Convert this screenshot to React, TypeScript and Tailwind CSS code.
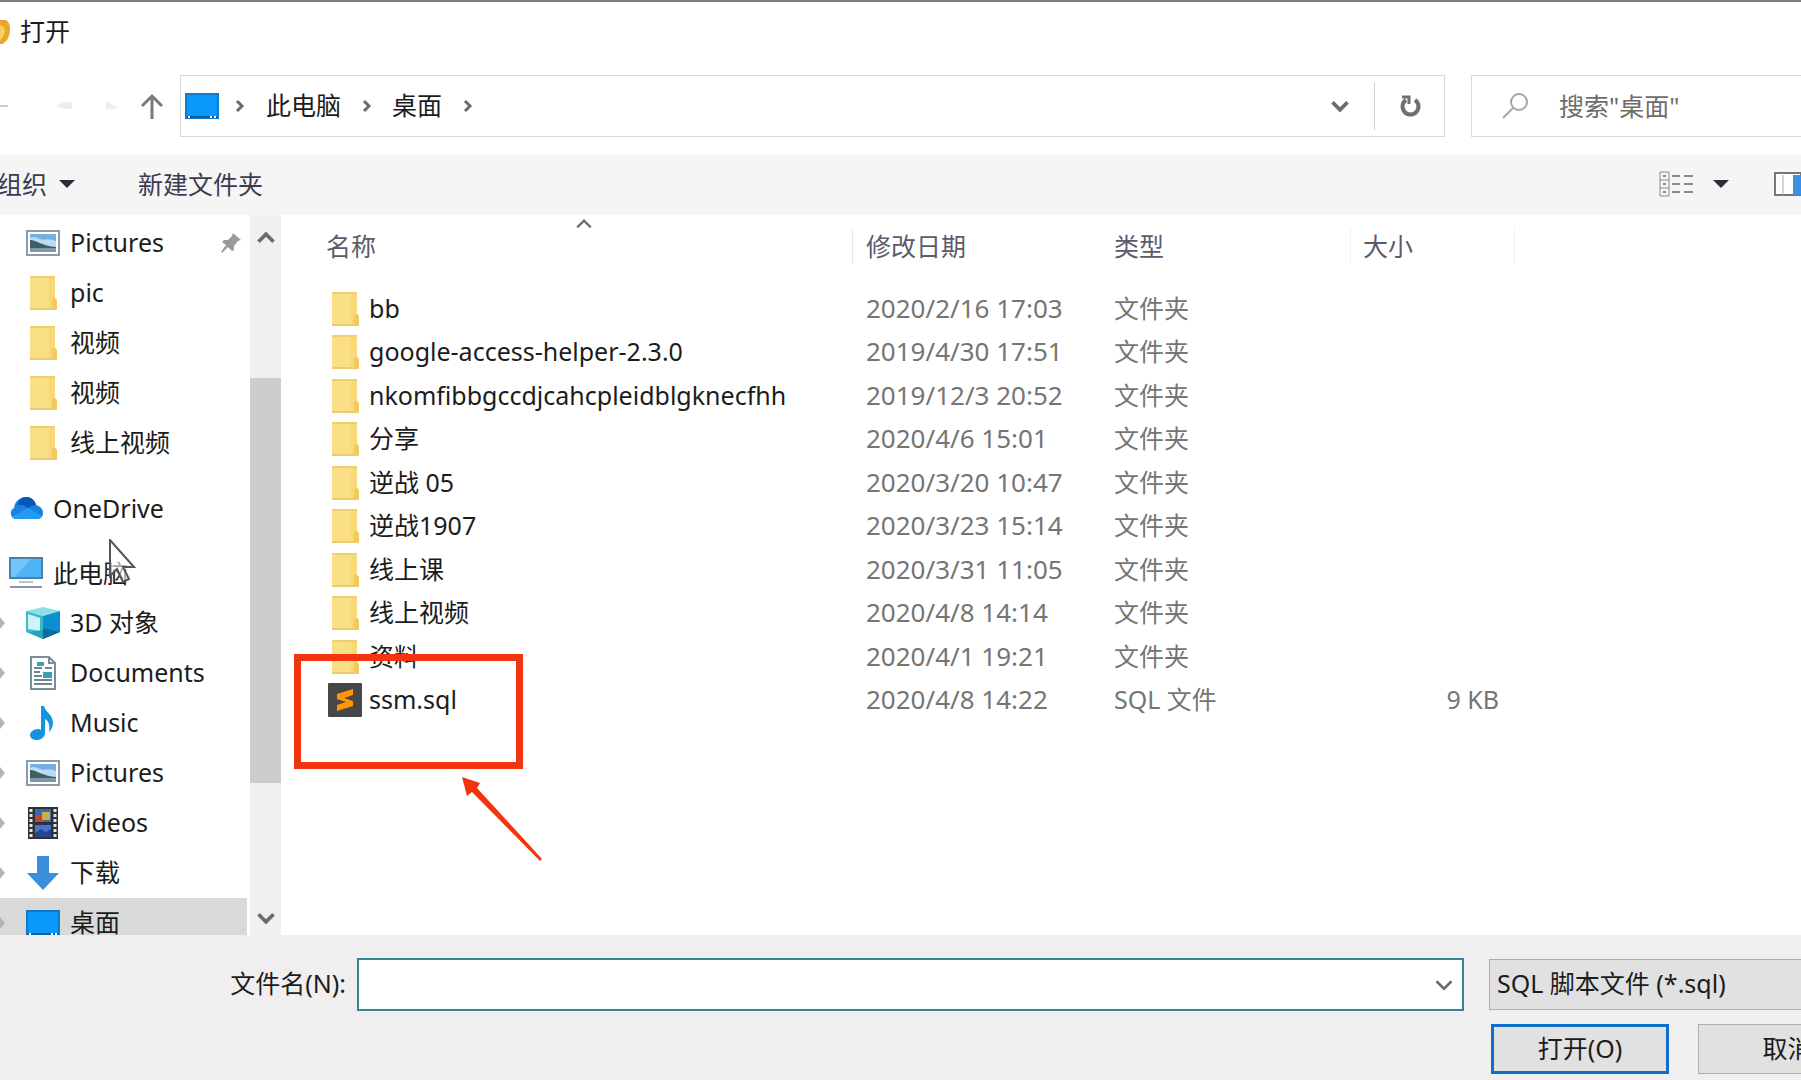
import type { ReactNode } from "react";

const quickAccess = [
  { label: "Pictures", icon: "pictures", pinned: true },
  { label: "pic", icon: "folder" },
  { label: "视频", icon: "folder" },
  { label: "视频", icon: "folder" },
  { label: "线上视频", icon: "folder" },
];

const thisPc = [
  { label: "3D 对象", icon: "cube" },
  { label: "Documents", icon: "documents" },
  { label: "Music", icon: "music" },
  { label: "Pictures", icon: "pictures" },
  { label: "Videos", icon: "videos" },
  { label: "下载", icon: "download" },
  { label: "桌面", icon: "desktop", selected: true },
];

const files = [
  { name: "bb", date: "2020/2/16 17:03", type: "文件夹", size: "" },
  { name: "google-access-helper-2.3.0", date: "2019/4/30 17:51", type: "文件夹", size: "" },
  { name: "nkomfibbgccdjcahcpleidblgknecfhh", date: "2019/12/3 20:52", type: "文件夹", size: "" },
  { name: "分享", date: "2020/4/6 15:01", type: "文件夹", size: "" },
  { name: "逆战 05", date: "2020/3/20 10:47", type: "文件夹", size: "" },
  { name: "逆战1907", date: "2020/3/23 15:14", type: "文件夹", size: "" },
  { name: "线上课", date: "2020/3/31 11:05", type: "文件夹", size: "" },
  { name: "线上视频", date: "2020/4/8 14:14", type: "文件夹", size: "" },
  { name: "资料", date: "2020/4/1 19:21", type: "文件夹", size: "" },
  { name: "ssm.sql", date: "2020/4/8 14:22", type: "SQL 文件", size: "9 KB" },
];

function FolderIcon() {
  return (
    <svg width="34" height="36" viewBox="0 0 34 36">
      <path d="M4 1h25v22l2 2v10H4z" fill="#fbdf86" />
      <path d="M4 1h25v2H4z" fill="#efd06c" />
      <path d="M23 3h6v19l-3 4v7h-3z" fill="#f9d878" />
      <path d="M26 25l2-3 3 3v10h-5z" fill="#f1c95c" />
      <path d="M4 33h27v2H4z" fill="#eccb6c" />
    </svg>
  );
}

function PicturesIcon() {
  return (
    <svg width="34" height="26" viewBox="0 0 34 26">
      <rect x="1" y="1" width="32" height="24" fill="#fff" stroke="#8e9aa5" strokeWidth="2" />
      <rect x="4" y="4" width="26" height="18" fill="#b9dcf3" />
      <path d="M4 4h26v7c-8-3-12 0-16-2S7 6 4 8z" fill="#75aee2" />
      <path d="M4 10c7 0 12 6 26 7v2H4z" fill="#3f5f5f" />
      <path d="M4 18h26v4H4z" fill="#7d99a8" />
    </svg>
  );
}

function DesktopIcon() {
  return (
    <svg width="34" height="26" viewBox="0 0 34 26">
      <rect x="1" y="1" width="32" height="24" fill="#0a98fb" stroke="#1478c8" strokeWidth="2" />
      <path d="M2 23h30v2H2z" fill="#0b5f9f" />
      <path d="M3 23h2v2H3zM25 23h2v2h-2zM29 23h2v2h-2z" fill="#fff" />
    </svg>
  );
}

function CubeIcon() {
  return (
    <svg width="34" height="34" viewBox="0 0 34 34">
      <path d="M0 5L17 1l17 4-17 5z" fill="#8fdfe6" />
      <path d="M0 5l17 5v23L0 26z" fill="#37bccb" />
      <path d="M2 8l12 4v13L2 23z" fill="#cdf3f5" />
      <path d="M17 10l17-5v21l-17 7z" fill="#0b8fcf" />
      <path d="M17 22l17 4-17 7z" fill="#0a6d9e" />
      <path d="M17 33V24L2 26z" fill="#25a6b4" />
    </svg>
  );
}

function DocumentsIcon() {
  return (
    <svg width="34" height="34" viewBox="0 0 34 34">
      <path d="M5 1h18l6 6v26H5z" fill="#fff" stroke="#78909a" strokeWidth="2" />
      <path d="M23 1v6h6" fill="none" stroke="#78909a" strokeWidth="2" />
      <path d="M8 12h8M8 16h6M8 20h8M8 24h18M8 28h18M19 12h7" stroke="#6b8792" strokeWidth="2" />
      <path d="M11 6h7v4h-7zM17 16h9v6h-9z" fill="#3d9fb4" />
    </svg>
  );
}

function MusicIcon() {
  return (
    <svg width="34" height="36" viewBox="0 0 34 36">
      <path
        d="M15 1h3c1 6 9 8 9 17 0 4-2 7-4 9 1-6 0-11-4-13v14c0 4-4 7-8 7s-7-2-7-5 4-6 8-6c1 0 2 0 3 1z"
        fill="#1494e0"
      />
    </svg>
  );
}

function VideosIcon() {
  return (
    <svg width="34" height="32" viewBox="0 0 34 32">
      <rect x="2" width="30" height="32" fill="#2f3137" />
      <path d="M5 2v30M29 2v30" stroke="#e4e6e8" strokeWidth="3" strokeDasharray="3 2" />
      <rect x="9" y="2" width="16" height="13" fill="#3a68b8" />
      <path d="M9 8h8v7H9z" fill="#c0463a" />
      <path d="M16 5h8v8h-8z" fill="#c8b23c" />
      <rect x="9" y="18" width="16" height="12" fill="#4474cf" />
      <path d="M9 26l6-4 5 3 5-3v8H9z" fill="#27458a" />
    </svg>
  );
}

function DownloadIcon() {
  return (
    <svg width="34" height="34" viewBox="0 0 34 34">
      <path d="M11 0h12v17h10L17 34 1 17h10z" fill="#3a8fdd" />
    </svg>
  );
}

function OneDriveIcon() {
  return (
    <svg width="34" height="24" viewBox="0 0 34 24">
      <path d="M6 23a6 6 0 0 1-1-11C6 5 11 1 17 1c5 0 9 3 10 8 4 1 7 4 7 8s-3 6-6 6z" fill="#1683e0" />
      <path d="M8 9c2-5 5-8 9-8 5 0 9 3 10 8-3 0-5 1-8 3-4-3-7-4-11-3z" fill="#0a56b6" />
      <path d="M3 21l16-9 14 8c-1 2-3 3-5 3H6z" fill="#249bf0" />
    </svg>
  );
}

function ComputerIcon() {
  return (
    <svg width="34" height="32" viewBox="0 0 34 32">
      <rect x="1" y="1" width="32" height="20" fill="#4fb3f8" stroke="#4a7fa8" strokeWidth="2" />
      <path d="M2 2h20L6 20H2z" fill="#73c5fb" />
      <path d="M10 24h14v2H10z" fill="#b9c3cb" />
      <path d="M1 29h32v2H1z" fill="#8996a3" />
    </svg>
  );
}

function SublimeIcon() {
  return (
    <svg width="34" height="34" viewBox="0 0 34 34">
      <rect width="34" height="34" rx="1" fill="#474747" />
      <path d="M9 11l16-5v6l-9 3 9 3v5L9 28v-6l9-3-9-3z" fill="#ff9800" />
    </svg>
  );
}

function Chevron({ direction, size = 16, stroke = 3 }: { direction: "up" | "down" | "right"; size?: number; stroke?: number }) {
  const paths = { up: "M2 11l6-6 6 6", down: "M2 5l6 6 6-6", right: "M6 3l5 5-5 5" };
  return (
    <svg width={size} height={size} viewBox="0 0 16 16" fill="none" stroke="#6c6c6c" strokeWidth={stroke}>
      <path d={paths[direction]} />
    </svg>
  );
}

function Triangle() {
  return (
    <svg width="16" height="8" viewBox="0 0 16 8">
      <path d="M0 0h16L8 8z" fill="#2e2e3a" />
    </svg>
  );
}

const icons: Record<string, ReactNode> = {
  folder: <FolderIcon />,
  pictures: <PicturesIcon />,
  cube: <CubeIcon />,
  documents: <DocumentsIcon />,
  music: <MusicIcon />,
  videos: <VideosIcon />,
  download: <DownloadIcon />,
  desktop: <DesktopIcon />,
};

function TitleBar() {
  return (
    <header className="flex h-[60px] items-center gap-[10px]">
      <svg width="10" height="26" viewBox="0 0 10 26">
        <path d="M0 1h6c3 2 4 5 4 9 0 7-3 13-8 15H0z" fill="#eca42a" />
        <path d="M0 6c4 1 6 5 4 10l-4 6z" fill="#f9cf62" />
      </svg>
      <h1 className="pb-[2px]">打开</h1>
    </header>
  );
}

function AddressBar() {
  return (
    <nav className="flex items-center pt-[13px]">
      <div className="flex w-[180px] shrink-0 items-center">
        <button aria-label="后退" className="w-[72px]">
          <svg width="72" height="16" viewBox="0 0 72 16">
            <path d="M0 8h8" stroke="#ccc" strokeWidth="2" />
            <path d="M56 8l8-4h8v7h-8z" fill="#ececec" />
          </svg>
        </button>
        <button aria-label="前进" className="ml-8 w-4">
          <svg width="16" height="10" viewBox="0 0 16 10">
            <path d="M2 0l13 7-13 2z" fill="#eee" />
          </svg>
        </button>
        <button aria-label="向上" className="ml-5">
          <svg width="24" height="26" viewBox="0 0 24 26" fill="none" stroke="#7a7a7a" strokeWidth="3">
            <path d="M12 26V3M2 13L12 3l10 10" />
          </svg>
        </button>
      </div>
      <div className="flex h-[62px] flex-1 items-center border border-[#d9d9d9] pl-1">
        <DesktopIcon />
        <span className="ml-3 flex w-[35px] justify-start">
          <Chevron direction="right" />
        </span>
        <button className="pb-[3px]">此电脑</button>
        <span className="ml-[17px] flex w-[34px]">
          <Chevron direction="right" />
        </span>
        <button className="pb-[3px]">桌面</button>
        <span className="ml-[17px] flex">
          <Chevron direction="right" />
        </span>
        <button aria-label="历史记录" className="mr-6 ml-auto">
          <Chevron direction="down" size={20} />
        </button>
        <button aria-label="刷新" className="flex h-12 w-[70px] items-center justify-center border-l border-[#d0d0d0]">
          <svg width="24" height="26" viewBox="0 0 24 26" fill="none" stroke="#707070" strokeWidth="4">
            <path d="M17 7a8 8 0 1 1-9 0" />
            <path d="M4 4h7v7" strokeWidth="3" />
          </svg>
        </button>
      </div>
      <label className="ml-[26px] flex h-[62px] w-[330px] shrink-0 items-center gap-[31px] border border-r-0 border-[#d9d9d9] pl-[30px]">
        <svg width="26" height="26" viewBox="0 0 26 26" fill="none" stroke="#a5a5a5" strokeWidth="2" className="shrink-0">
          <circle cx="17" cy="9" r="8" />
          <path d="M11 15L1 25" />
        </svg>
        <input
          aria-label="搜索"
          placeholder='搜索"桌面"'
          className="w-full min-w-0 outline-none placeholder:text-[#6d6d6d]"
        />
      </label>
    </nav>
  );
}

function Toolbar() {
  return (
    <div className="mt-[18px] flex h-[60px] items-center bg-[#f5f5f5] pb-[2px] text-[#3b3b4f]">
      <button className="-ml-[3px] flex items-center gap-3">
        组织
        <Triangle />
      </button>
      <button className="ml-[63px]">新建文件夹</button>
      <button aria-label="更改视图" className="ml-auto flex items-center gap-[18px]">
        <svg width="36" height="26" viewBox="0 0 36 26" fill="none" stroke="#8a8a8a">
          <path d="M1 1h9v24H1zM1 9h9M1 17h9" strokeWidth="1" />
          <path d="M4 5h3M4 13h3M4 21h3" strokeWidth="2" />
          <path d="M13 5h8M25 5h9M13 13h8M25 13h9M13 21h8M25 21h9" strokeWidth="2" />
        </svg>
        <Triangle />
      </button>
      <button aria-label="预览窗格" className="ml-[45px]">
        <svg width="27" height="26" viewBox="0 0 27 26">
          <path d="M1 2h26v22H1z" fill="#fff" stroke="#777" strokeWidth="2" />
          <path d="M9 4v20" stroke="#aaa" />
          <path d="M19 4h8v20h-8z" fill="#3d8fe0" />
        </svg>
      </button>
    </div>
  );
}

function TreeRow({ label, icon, pinned, selected, arrow }: { label: string; icon: string; pinned?: boolean; selected?: boolean; arrow?: boolean }) {
  return (
    <li className={selected ? "bg-[#d9d9d9]" : ""}>
      <button className="flex h-[50px] w-full items-center">
        <span className="w-[26px]">
          {arrow && (
            <svg width="6" height="12" viewBox="0 0 6 12">
              <path d="M0 0l5 6-5 6z" fill="#b5b5b5" />
            </svg>
          )}
        </span>
        {icons[icon]}
        <span className="ml-[10px] pb-[2px]">{label}</span>
        {pinned && (
          <svg width="20" height="20" viewBox="0 0 20 20" className="mr-[6px] ml-auto">
            <path d="M12 0l8 7-3 1-4 5v4l-2 1-4-4-6 6-1-1 5-7-4-3 2-2h4l4-4z" fill="#9a9a9a" />
          </svg>
        )}
      </button>
    </li>
  );
}

function Sidebar() {
  return (
    <aside className="relative flex w-[283px] shrink-0 overflow-hidden">
      <div className="h-0 flex-1 pt-[3px]">
        <ul>
          {quickAccess.map((item, i) => (
            <TreeRow key={i} {...item} />
          ))}
        </ul>
        <button className="mt-[15px] flex h-[50px] items-center gap-[10px] pl-[9px]">
          <OneDriveIcon />
          OneDrive
        </button>
        <button className="mt-[15px] flex h-[50px] items-center gap-[10px] pl-[9px]">
          <ComputerIcon />
          此电脑
        </button>
        <ul>
          {thisPc.map((item) => (
            <TreeRow key={item.label} {...item} arrow />
          ))}
        </ul>
      </div>
      <div className="mr-[2px] ml-[3px] flex w-[31px] flex-col items-center bg-[#f0f0f0]">
        <button aria-label="向上滚动" className="flex h-[46px] items-center">
          <Chevron direction="up" size={20} />
        </button>
        <div className="mt-[117px] h-[405px] w-full bg-[#cdcdcd]" />
        <button aria-label="向下滚动" className="mt-auto flex h-[34px] items-center">
          <Chevron direction="down" size={20} />
        </button>
      </div>

      {/* Mouse pointer */}
      <svg width="28" height="46" viewBox="0 0 28 46" className="absolute top-[324px] left-[109px]">
        <path
          d="M1 1v36l7-7 6 13 6-3-6-12h11z"
          fill="#fff"
          fillOpacity="0.6"
          stroke="#555"
          strokeWidth="2"
        />
      </svg>
    </aside>
  );
}

function FileList() {
  return (
    <section className="relative min-w-0 flex-1">
      <span className="absolute top-0 left-[292px] flex">
        <Chevron direction="up" size={18} stroke={2} />
      </span>
      <table className="w-full table-fixed text-left whitespace-nowrap text-[#757575]">
        <colgroup>
          <col className="w-[569px]" />
          <col className="w-[248px]" />
          <col className="w-[250px]" />
          <col className="w-[165px]" />
          <col />
        </colgroup>
        <thead>
          <tr className="h-[72px] text-[#5b5b6b]">
            <th className="p-0 pb-[10px] pl-[43px] font-normal">名称</th>
            <th className="p-0 pb-[10px] font-normal">
              <div className="border-l border-[#e8e8e8] pl-[13px]">修改日期</div>
            </th>
            <th className="p-0 pb-[10px] pl-[14px] font-normal">类型</th>
            <th className="p-0 pb-[10px] font-normal">
              <div className="border-x border-[#f0f0f0] pl-[12px]">大小</div>
            </th>
            <th />
          </tr>
        </thead>
        <tbody>
          {files.map((file) => (
            <tr key={file.name} className="odd:h-[43px] even:h-[44px]">
              <td className="p-0 pl-[45px]">
                <div className="flex h-9 items-center gap-[7px] text-[#1c1c1c]">
                  {file.size ? <SublimeIcon /> : <FolderIcon />}
                  <span className="pb-[2px]">{file.name}</span>
                </div>
              </td>
              <td className="p-0 pb-[2px] pl-[14px] text-[26px]">{file.date}</td>
              <td className="p-0 pb-[2px] pl-[14px]">{file.type}</td>
              <td className="p-0 pr-4 pb-[2px] text-right">{file.size}</td>
              <td />
            </tr>
          ))}
        </tbody>
      </table>

      {/* Callout around ssm.sql */}
      <div className="absolute top-[439px] left-[11px] h-[115px] w-[229px] border-[7px] border-[#f3350f]" />
      <svg width="84" height="88" viewBox="0 0 84 88" className="absolute top-[560px] left-[177px]">
        <path d="M2 2l18 6-3 5 65 71-2 2-68-69-5 4z" fill="#f3350f" />
      </svg>
    </section>
  );
}

function Footer() {
  return (
    <footer className="-mr-[76px] flex h-[145px] flex-col gap-[13px] bg-[#f0eeef] pt-[23px]">
      <div className="flex h-[53px] items-center">
        <label htmlFor="filename" className="w-[357px] shrink-0 pr-[11px] pb-[3px] text-right">
          文件名(N):
        </label>
        <div className="flex h-full flex-1 items-center border-2 border-[#3a8295] bg-white pr-2">
          <input id="filename" className="h-full min-w-0 flex-1 px-2 outline-none" />
          <Chevron direction="down" size={20} stroke={2} />
        </div>
        <select
          aria-label="文件类型"
          className="ml-[25px] h-[51px] w-[388px] shrink-0 appearance-none border border-[#adadad] bg-[#e1e1e1] pb-[3px] pl-[7px]"
        >
          <option>SQL 脚本文件 (*.sql)</option>
        </select>
      </div>
      <div className="flex justify-end gap-[29px]">
        <button className="h-[50px] w-[178px] border-[3px] border-[#0f6fc9] bg-[#e1e1e1] pb-[3px]">打开(O)</button>
        <button className="h-[50px] w-[179px] border border-[#adadad] bg-[#e1e1e1] pb-[3px]">取消</button>
      </div>
    </footer>
  );
}

export default function App() {
  return (
    <div className="flex min-h-screen flex-col overflow-hidden border-t-2 border-[#7a7a7a] bg-white font-['Noto_Sans','Noto_Sans_CJK_SC',sans-serif] text-[25px] leading-9 text-[#1c1c1c]">
      <TitleBar />
      <AddressBar />
      <Toolbar />
      <main className="flex flex-1">
        <Sidebar />
        <FileList />
      </main>
      <Footer />
    </div>
  );
}
